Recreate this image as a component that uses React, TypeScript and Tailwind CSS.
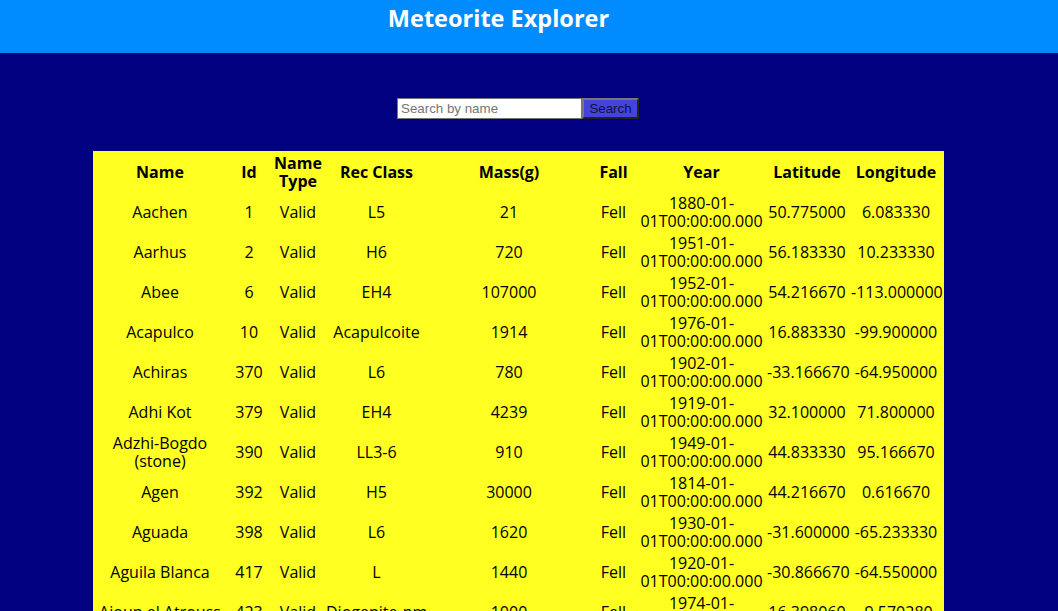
import React from 'react';

type Meteorite = {
  name: string;
  id: number;
  nametype: string;
  recclass: string;
  mass: string;
  fall: string;
  year: string;
  lat: string;
  lon: string;
};

const rows: Meteorite[] = [
  { name: 'Aachen', id: 1, nametype: 'Valid', recclass: 'L5', mass: '21', fall: 'Fell', year: '1880', lat: '50.775000', lon: '6.083330' },
  { name: 'Aarhus', id: 2, nametype: 'Valid', recclass: 'H6', mass: '720', fall: 'Fell', year: '1951', lat: '56.183330', lon: '10.233330' },
  { name: 'Abee', id: 6, nametype: 'Valid', recclass: 'EH4', mass: '107000', fall: 'Fell', year: '1952', lat: '54.216670', lon: '-113.000000' },
  { name: 'Acapulco', id: 10, nametype: 'Valid', recclass: 'Acapulcoite', mass: '1914', fall: 'Fell', year: '1976', lat: '16.883330', lon: '-99.900000' },
  { name: 'Achiras', id: 370, nametype: 'Valid', recclass: 'L6', mass: '780', fall: 'Fell', year: '1902', lat: '-33.166670', lon: '-64.950000' },
  { name: 'Adhi Kot', id: 379, nametype: 'Valid', recclass: 'EH4', mass: '4239', fall: 'Fell', year: '1919', lat: '32.100000', lon: '71.800000' },
  { name: 'Adzhi-Bogdo (stone)', id: 390, nametype: 'Valid', recclass: 'LL3-6', mass: '910', fall: 'Fell', year: '1949', lat: '44.833330', lon: '95.166670' },
  { name: 'Agen', id: 392, nametype: 'Valid', recclass: 'H5', mass: '30000', fall: 'Fell', year: '1814', lat: '44.216670', lon: '0.616670' },
  { name: 'Aguada', id: 398, nametype: 'Valid', recclass: 'L6', mass: '1620', fall: 'Fell', year: '1930', lat: '-31.600000', lon: '-65.233330' },
  { name: 'Aguila Blanca', id: 417, nametype: 'Valid', recclass: 'L', mass: '1440', fall: 'Fell', year: '1920', lat: '-30.866670', lon: '-64.550000' },
  { name: 'Aioun el Atrouss', id: 423, nametype: 'Valid', recclass: 'Diogenite-pm', mass: '1000', fall: 'Fell', year: '1974', lat: '16.398060', lon: '-9.570280' },
  { name: 'Aïr', id: 424, nametype: 'Valid', recclass: 'L6', mass: '24000', fall: 'Fell', year: '1925', lat: '19.083330', lon: '8.383330' },
  { name: 'Aire-sur-la-Lys', id: 425, nametype: 'Valid', recclass: 'Unknown', mass: '', fall: 'Fell', year: '1769', lat: '50.666670', lon: '2.333330' },
];

export default function App() {
  return (
    <div className="min-h-screen bg-[#000080] font-['Open_Sans',sans-serif]">
      <header className="h-[53px] bg-[#008cff] pr-[61px] pt-[2px] text-center">
        <h1 className="text-[23.5px] font-bold leading-[32px] text-white">Meteorite Explorer</h1>
      </header>

      <div className="flex pl-[397px] pt-[45px]">
        <input
          type="text"
          placeholder="Search by name"
          className="h-[21px] w-[185px] border border-[#767676] bg-white px-[3px] font-['Liberation_Sans',Arial,sans-serif] text-[13.33px] text-black placeholder:text-[#757575] outline-none"
        />
        <button className="h-[21px] w-[57px] border-2 border-t-[#777777] border-l-[#777777] border-r-[#222222] border-b-[#222222] bg-[#4444dd] font-['Liberation_Sans',Arial,sans-serif] text-[13.33px] leading-none text-[#111133]">
          Search
        </button>
      </div>

      <div className="pl-[93px] pt-[32px]">
        <table className="w-[851px] table-fixed border-separate border-spacing-[2px] bg-[#ffff22] text-center text-[16px] leading-[18px] text-black">
          <thead>
            <tr>
              <th className="w-[130px] p-[1px] font-bold">Name</th>
              <th className="w-[44px] p-[1px] font-bold">Id</th>
              <th className="w-[50px] p-[1px] font-bold">Name Type</th>
              <th className="w-[103px] p-[1px] font-bold">Rec Class</th>
              <th className="w-[158px] p-[1px] font-bold">Mass(g)</th>
              <th className="w-[47px] p-[1px] font-bold">Fall</th>
              <th className="w-[125px] p-[1px] font-bold">Year</th>
              <th className="w-[82px] p-[1px] font-bold">Latitude</th>
              <th className="w-[92px] p-[1px] font-bold">Longitude</th>
            </tr>
          </thead>
          <tbody>
            {rows.map((r) => (
              <tr key={r.id}>
                <td className="p-[1px]">{r.name}</td>
                <td className="p-[1px]">{r.id}</td>
                <td className="p-[1px]">{r.nametype}</td>
                <td className="whitespace-nowrap p-[1px]">{r.recclass}</td>
                <td className="p-[1px]">{r.mass}</td>
                <td className="p-[1px]">{r.fall}</td>
                <td className="p-[1px]">
                  {r.year}-01-
                  <br />
                  01T00:00:00.000
                </td>
                <td className="whitespace-nowrap p-[1px]">{r.lat}</td>
                <td className="whitespace-nowrap p-[1px]">{r.lon}</td>
              </tr>
            ))}
          </tbody>
        </table>
      </div>
    </div>
  );
}
